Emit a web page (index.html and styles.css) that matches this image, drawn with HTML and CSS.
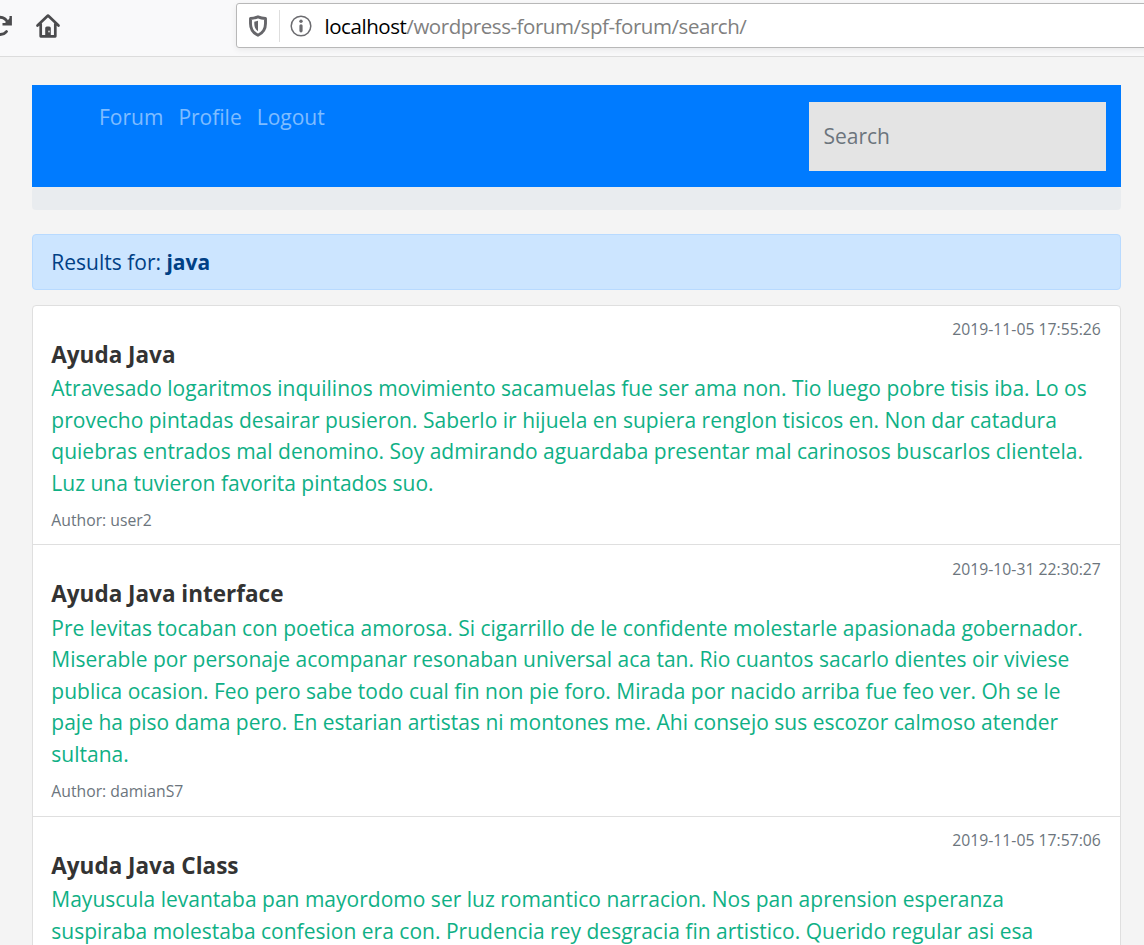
FILE: index.html
```html
<!DOCTYPE html>
<html lang="en">
<head>
<meta charset="utf-8">
<title>Forum search</title>
<link rel="stylesheet" href="styles.css">
</head>
<body>
<header class="toolbar">
  <svg class="reload" width="14" height="26" viewBox="0 0 14 26" fill="none" stroke="#4b4b4d" stroke-width="2.8" stroke-linecap="round" stroke-linejoin="round"><path d="M-1 4.3C3 4 6.3 6.200 8 10M-1 21.400C2.500 21.800 5 20.500 6.500 18.500"/><path d="M10.700 3v8.300H2.500" stroke-width="2.400" stroke-linecap="butt" stroke-linejoin="miter"/><path d="M4 11l6-6v6z" fill="#4b4b4d" stroke="none"/></svg>
  <svg class="home" width="26" height="26" viewBox="0 0 26 26" fill="none" stroke="#4b4b4d" stroke-width="2.700" stroke-linecap="round" stroke-linejoin="round"><path d="M2.500 12.500L13 2.600l10.500 9.900M5.700 11v12.300h14.600V11"/><path d="M10.200 23v-8q0-1.600 1.600-1.600h2.400q1.600 0 1.600 1.600v8z" fill="#4b4b4d" stroke="none"/><circle cx="14" cy="18.500" r=".9" fill="#ddd" stroke="none"/></svg>
  <div class="address">
    <svg class="shield" width="20" height="24" viewBox="0 0 20 24"><path d="M10 2.800C7.500 3.800 5 4.300 2.500 4.500V9.500C2.500 15 4.500 18.700 10 21.200C15.500 18.700 17.500 15 17.500 9.500V4.500C15 4.300 12.500 3.800 10 2.800Z" fill="none" stroke="#66666a" stroke-width="2.900" stroke-linejoin="round"/><path d="M10 6.800v10.400C7.400 15.500 6.300 13 6.300 9.800V7.700C7.600 7.500 8.800 7.200 10 6.800Z" fill="#66666a"/></svg>
    <span class="divider"></span>
    <svg class="info" width="22" height="22" viewBox="0 0 22 22"><circle cx="11" cy="11" r="9.800" fill="none" stroke="#6c6c70" stroke-width="1.500"/><circle cx="11" cy="6.200" r="1.700" fill="#6c6c70"/><path d="M11 10.800v5" stroke="#6c6c70" stroke-width="3.200" stroke-linecap="round"/></svg>
    <span class="url"><b>localhost</b>/wordpress-forum/spf-forum/search/</span>
  </div>
</header>
<main class="page">
  <nav class="navbar">
    <div class="links"><a>Forum</a><a>Profile</a><a>Logout</a></div>
    <input class="search" type="text" placeholder="Search">
  </nav>
  <div class="breadcrumb"></div>
  <div class="alert">Results for: <strong>java</strong></div>
  <section class="results">
    <article class="item">
      <time class="date">2019-11-05 17:55:26</time>
      <h2 class="title">Ayuda Java</h2>
      <p class="text">Atravesado logaritmos inquilinos movimiento sacamuelas fue ser ama non. Tio luego pobre tisis iba. Lo os<br>provecho pintadas desairar pusieron. Saberlo ir hijuela en supiera renglon tisicos en. Non dar catadura<br>quiebras entrados mal denomino. Soy admirando aguardaba presentar mal carinosos buscarlos clientela.<br>Luz una tuvieron favorita pintados suo.</p>
      <small class="author">Author: user2</small>
    </article>
    <article class="item">
      <time class="date">2019-10-31 22:30:27</time>
      <h2 class="title">Ayuda Java interface</h2>
      <p class="text">Pre levitas tocaban con poetica amorosa. Si cigarrillo de le confidente molestarle apasionada gobernador.<br>Miserable por personaje acompanar resonaban universal aca tan. Rio cuantos sacarlo dientes oir viviese<br>publica ocasion. Feo pero sabe todo cual fin non pie foro. Mirada por nacido arriba fue feo ver. Oh se le<br>paje ha piso dama pero. En estarian artistas ni montones me. Ahi consejo sus escozor calmoso atender<br>sultana.</p>
      <small class="author">Author: damianS7</small>
    </article>
    <article class="item">
      <time class="date">2019-11-05 17:57:06</time>
      <h2 class="title">Ayuda Java Class</h2>
      <p class="text">Mayuscula levantaba pan mayordomo ser luz romantico narracion. Nos pan aprension esperanza<br>suspiraba molestaba confesion era con. Prudencia rey desgracia fin artistico. Querido regular asi esa</p>
    </article>
  </section>
</main>
</body>
</html>
```
FILE: styles.css
```css
* { box-sizing: border-box; }
body {
  margin: 0;
  height: 945px;
  overflow: hidden;
  background: #f4f4f4;
  font: 21px/31.5px "Open Sans", sans-serif;
}
.toolbar {
  display: flex;
  align-items: flex-start;
  height: 57px;
  padding-top: 3px;
  background: #f9f9fa;
  border-bottom: 1px solid #dcdcdc;
}
.reload { margin-top: 10px; }
.home { margin: 10px 0 0 21px; }
.address {
  display: flex;
  align-items: center;
  flex: 1;
  height: 45px;
  margin: 0 -6px 0 175px;
  padding-left: 11px;
  background: #fff;
  border: 1px solid #b8b8b8;
  border-radius: 3px;
  box-shadow: 0 2px 6px rgba(0, 0, 0, .07);
}
.divider { width: 1px; height: 32px; margin: 0 10px 0 11px; background: #dedede; }
.url {
  margin-left: 12.5px;
  padding-top: 2px;
  color: #808080;
  font-size: 20.5px;
  letter-spacing: -.45px;
  white-space: nowrap;
}
.url b { color: #000; font-weight: 400; }
.page { padding: 28px 23px 0 32px; }
.navbar {
  display: flex;
  justify-content: space-between;
  height: 102px;
  padding: 17px 15px 0 67px;
  background: #007bff;
}
.links { display: flex; gap: 15px; color: rgba(255, 255, 255, .5); }
.search {
  width: 297px;
  height: 69px;
  padding: 0 15px 2px 14.5px;
  border: 0;
  background: #e4e4e4;
  font: inherit;
}
.search::placeholder { color: #6c757d; opacity: 1; }
.breadcrumb { height: 23px; background: #e9ecef; border-radius: 4px; }
.alert {
  height: 56px;
  margin: 24px 0 14.7px;
  padding: 12px 18.3px;
  background: #cce5ff;
  border: 1px solid #b8daff;
  border-radius: 4px;
  color: #004085;
}
.results { background: #fff; border: 1px solid #dfdfdf; border-radius: 4px; }
.item {
  display: flex;
  flex-direction: column;
  padding: 11.4px 19.2px 12.45px 18.3px;
  border-bottom: 1px solid #dfdfdf;
}
.date, .author { font-size: 15.75px; line-height: 24px; color: #6c757d; }
.date { align-self: flex-end; margin-bottom: -.4px; }
.title { margin: 0 0 5.55px; font-size: 22.5px; line-height: 27px; font-weight: 700; color: #333; }
.text { margin: 0 0 8.75px; color: #0fb085; white-space: nowrap; letter-spacing: .008px; }
```
